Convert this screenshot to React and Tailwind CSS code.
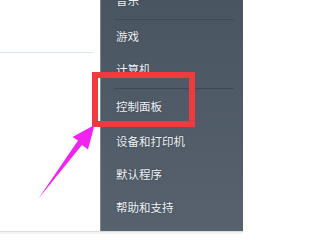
import React from "react";

const font = { fontFamily: '"Noto Sans CJK SC", "Noto Sans", sans-serif' };

function Item({ label, className = "" }) {
  return (
    <div className={`h-[33px] flex items-center pl-[15px] text-[11.5px] leading-none text-[#eef1f4] ${className}`}>
      <span style={{ textShadow: "0 0 2px rgba(30,40,50,0.5)" }}>{label}</span>
    </div>
  );
}

function Sep({ className = "" }) {
  return (
    <div className={`flex flex-col ${className}`}>
      <div className="ml-[13px] mr-[9px] h-px bg-[#3f4954]" />
      <div className="ml-[13px] mr-[9px] h-px bg-[#5c6773]" />
    </div>
  );
}

export default function App() {
  return (
    <div className="relative w-[243px] h-[234px] overflow-hidden bg-white" style={font}>
      <div className="flex h-[231px]">
        <div className="w-[100px] shrink-0 flex flex-col">
          <div className="h-[52px]" />
          <div className="w-[93px] h-px bg-[#dbe4ec]" />
        </div>
        <div className="flex-1 flex flex-col overflow-hidden border-l border-[#7e8893] bg-gradient-to-b from-[#4a5562] to-[#57626e]">
          <Item label="音乐" className="-mt-[16px] shrink-0" />
          <div className="h-[3px] shrink-0 pt-[2px] flex flex-col">
            <div className="ml-[13px] mr-[9px] h-px bg-[#3f4954]" />
          </div>
          <Item label="游戏" className="shrink-0" />
          <Item label="计算机" className="shrink-0" />
          <div className="h-[4px] shrink-0 pt-[2px] flex flex-col">
            <div className="ml-[13px] mr-[9px] h-px bg-[#3f4954]" />
          </div>
          <Item label="控制面板" className="shrink-0" />
          <Item label="设备和打印机" className="shrink-0 mt-[2px]" />
          <Item label="默认程序" className="shrink-0" />
          <Item label="帮助和支持" className="shrink-0" />
        </div>
      </div>
      <div className="h-[3px] border-t border-[#dcdcdc] bg-[#f3f3f3]" />

      {/* red highlight box */}
      <div className="absolute left-[92px] top-[72px] w-[103px] h-[55px] border-[6px] border-[#f03a3f]" />

      {/* magenta arrow */}
      <svg className="absolute left-0 top-0" width="243" height="234" viewBox="0 0 243 234">
        <polygon
          points="94.5,125 72.5,137 78,140.5 38.5,198.5 82,145 88,149.5"
          fill="#f024f0"
        />
      </svg>
    </div>
  );
}
